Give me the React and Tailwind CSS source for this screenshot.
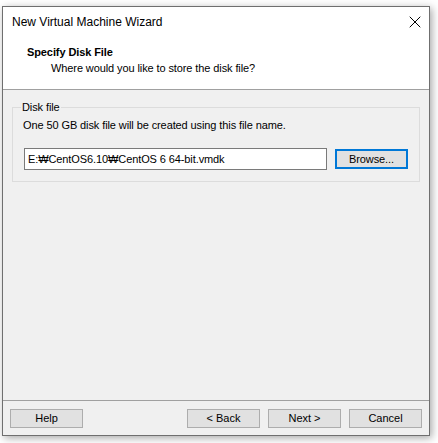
import { X } from "lucide-react";

function Button({ children, focused, className = "" }) {
  return (
    <button
      className={`flex items-center justify-center text-[11px] text-black bg-[#e1e1e1] ${
        focused ? "border-2 border-[#0078d7]" : "border border-[#adadad]"
      } ${className}`}
    >
      {children}
    </button>
  );
}

export default function App() {
  return (
    <div
      className="w-[438px] h-[443px] bg-white overflow-hidden text-[11px] text-black pt-[6px]"
      style={{ fontFamily: '"Liberation Sans", "Noto Sans CJK KR", sans-serif' }}
    >
      <div className="ml-[2px] w-[428px] h-[430px] flex flex-col border border-[#6f6f6f] bg-[#f0f0f0] shadow-[2px_2px_8px_rgba(0,0,0,0.35)]">
        {/* title bar */}
        <div className="h-[30px] bg-white flex items-center justify-between pl-[9px] pr-[4px]">
          <span className="text-[12px]">New Virtual Machine Wizard</span>
          <X className="w-[20px] h-[20px]" strokeWidth={1.2} />
        </div>

        {/* header */}
        <div className="h-[53px] bg-white border-b border-[#a0a0a0] pt-[7px] pl-[24px] tracking-[-0.1px]">
          <div className="font-bold leading-[16px]">Specify Disk File</div>
          <div className="pl-[24px] leading-[16px]">Where would you like to store the disk file?</div>
        </div>

        {/* body */}
        <div className="flex-1 pt-[10px] pl-[9px] tracking-[-0.1px]">
          <fieldset className="w-[408px] border border-[#dcdcdc] pl-[10px] pr-[8px] pb-[11px]">
            <legend className="ml-[-2px] px-[1px] leading-[14px]">Disk file</legend>
            <div className="leading-[16px] mt-[3px]">
              One 50 GB disk file will be created using this file name.
            </div>
            <div className="flex items-center mt-[15px] gap-[8px] ml-[1px]">
              <div className="w-[303px] h-[22px] bg-white border border-[#7a7a7a] flex items-center pl-[3px]">
                E:₩CentOS6.10₩CentOS 6 64-bit.vmdk
              </div>
              <Button focused className="w-[73px] h-[20px]">
                Browse...
              </Button>
            </div>
          </fieldset>
        </div>

        {/* footer */}
        <div className="h-[35px] border-t border-[#a0a0a0] flex items-start pt-[8px] px-[7px]">
          <Button className="w-[73px] h-[19px]">Help</Button>
          <div className="flex-1" />
          <div className="flex gap-[8px]">
            <Button className="w-[73px] h-[19px]">&lt; Back</Button>
            <Button className="w-[73px] h-[19px]">Next &gt;</Button>
            <Button className="w-[73px] h-[19px]">Cancel</Button>
          </div>
        </div>
      </div>
    </div>
  );
}
